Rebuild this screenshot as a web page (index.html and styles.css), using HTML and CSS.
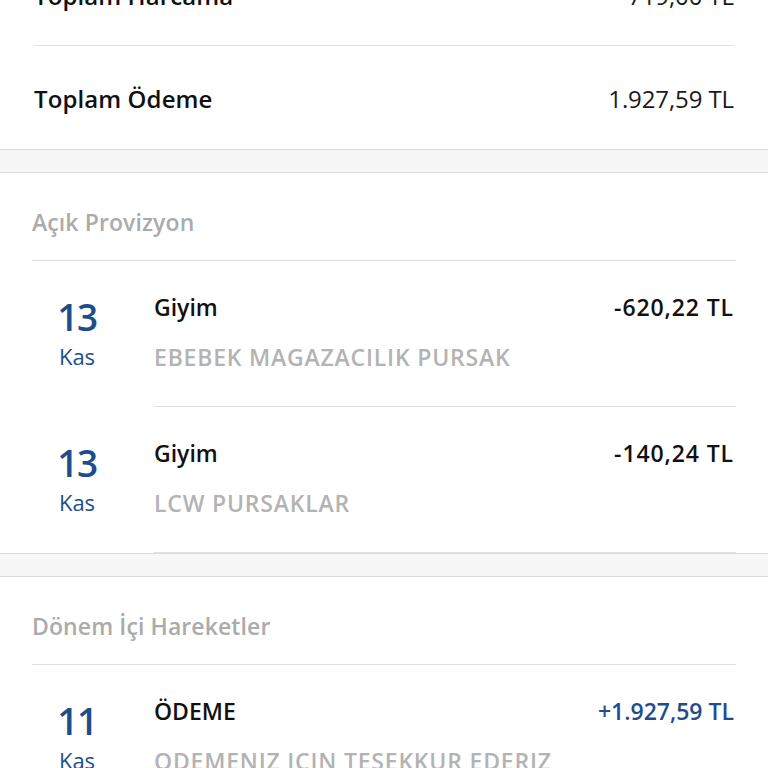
FILE: index.html
```html
<!DOCTYPE html>
<html lang="tr">
<head>
<meta charset="utf-8">
<title>Ekstre</title>
<link rel="stylesheet" href="styles.css">
</head>
<body>
<div class="page">
  <section class="summary">
    <div class="sum-row">
      <span class="sum-label">Toplam Harcama</span>
      <span class="sum-value">719,00 TL</span>
    </div>
    <div class="sum-row">
      <span class="sum-label">Toplam Ödeme</span>
      <span class="sum-value">1.927,59 TL</span>
    </div>
  </section>
  <div class="band"></div>
  <section class="group">
    <h2 class="group-title">Açık Provizyon</h2>
    <div class="tx">
      <div class="tx-date"><span class="day">13</span><span class="mon">Kas</span></div>
      <div class="tx-main">
        <div class="tx-top"><span class="tx-title">Giyim</span><span class="tx-amount">-620,22 TL</span></div>
        <div class="tx-desc">EBEBEK MAGAZACILIK PURSAK</div>
      </div>
    </div>
    <div class="tx">
      <div class="tx-date"><span class="day">13</span><span class="mon">Kas</span></div>
      <div class="tx-main">
        <div class="tx-top"><span class="tx-title">Giyim</span><span class="tx-amount">-140,24 TL</span></div>
        <div class="tx-desc">LCW PURSAKLAR</div>
      </div>
    </div>
  </section>
  <div class="band"></div>
  <section class="group">
    <h2 class="group-title">Dönem İçi Hareketler</h2>
    <div class="tx">
      <div class="tx-date"><span class="day">11</span><span class="mon">Kas</span></div>
      <div class="tx-main">
        <div class="tx-top"><span class="tx-title">ÖDEME</span><span class="tx-amount plus">+1.927,59 TL</span></div>
        <div class="tx-desc">ODEMENIZ ICIN TESEKKUR EDERIZ</div>
      </div>
    </div>
  </section>
</div>
</body>
</html>
```

FILE: styles.css
```css
html, body {
  margin: 0;
  padding: 0;
  background: #ffffff;
}
body {
  font-family: "Open Sans", "Liberation Sans", sans-serif;
  color: #111111;
  overflow: hidden;
  height: 768px;
}
.page {
  margin-top: -56px;
}
.summary {
  padding: 0 34px;
}
.sum-row {
  height: 102px;
  display: flex;
  align-items: center;
  justify-content: space-between;
  border-bottom: 1px solid #e2e2e2;
  padding-top: 2px;
  box-sizing: border-box;
}
.sum-row:last-child {
  border-bottom: none;
  height: 103px;
}
.sum-label {
  font-size: 24px;
  font-weight: 600;
  letter-spacing: 0.1px;
}
.sum-value {
  font-size: 24px;
  font-weight: 400;
  letter-spacing: -0.1px;
  color: #1a1a1a;
}
.band {
  height: 22px;
  background: #f7f7f7;
  border-top: 1px solid #dcdcdc;
  border-bottom: 1px solid #dcdcdc;
}
.group {
  padding: 0 32px;
}
.group-title {
  margin: 0;
  height: 88px;
  box-sizing: border-box;
  padding-top: 34px;
  font-size: 23px;
  line-height: 30px;
  font-weight: 600;
  color: #ababab;
  letter-spacing: 0.1px;
  border-bottom: 1px solid #e0e0e0;
}
.tx {
  display: flex;
}
.tx-date {
  width: 90px;
  flex: 0 0 90px;
  display: flex;
  flex-direction: column;
  align-items: center;
  padding-top: 36px;
  color: #1f4d8c;
}
.tx-main {
  flex: 1;
  margin-left: 32px;
  height: 114px;
  padding-top: 31px;
  border-bottom: 1px solid #e0e0e0;
}
.day {
  font-size: 37px;
  line-height: 40px;
  font-weight: 600;
  letter-spacing: -1.5px;
}
.mon {
  font-size: 22px;
  line-height: 30px;
  margin-top: 4px;
}
.tx-top {
  display: flex;
  justify-content: space-between;
  align-items: center;
  height: 30px;
  padding-right: 2px;
}
.tx-title {
  font-size: 23px;
  font-weight: 600;
  line-height: 30px;
}
.tx-amount {
  font-size: 23px;
  font-weight: 600;
  line-height: 30px;
  letter-spacing: 0.9px;
}
.tx-amount.plus {
  color: #1f4d8c;
  letter-spacing: 0;
}
.tx-desc {
  margin-top: 20px;
  font-size: 23px;
  line-height: 30px;
  color: #b3b3b3;
  font-weight: 600;
  letter-spacing: 0.8px;
}
```
